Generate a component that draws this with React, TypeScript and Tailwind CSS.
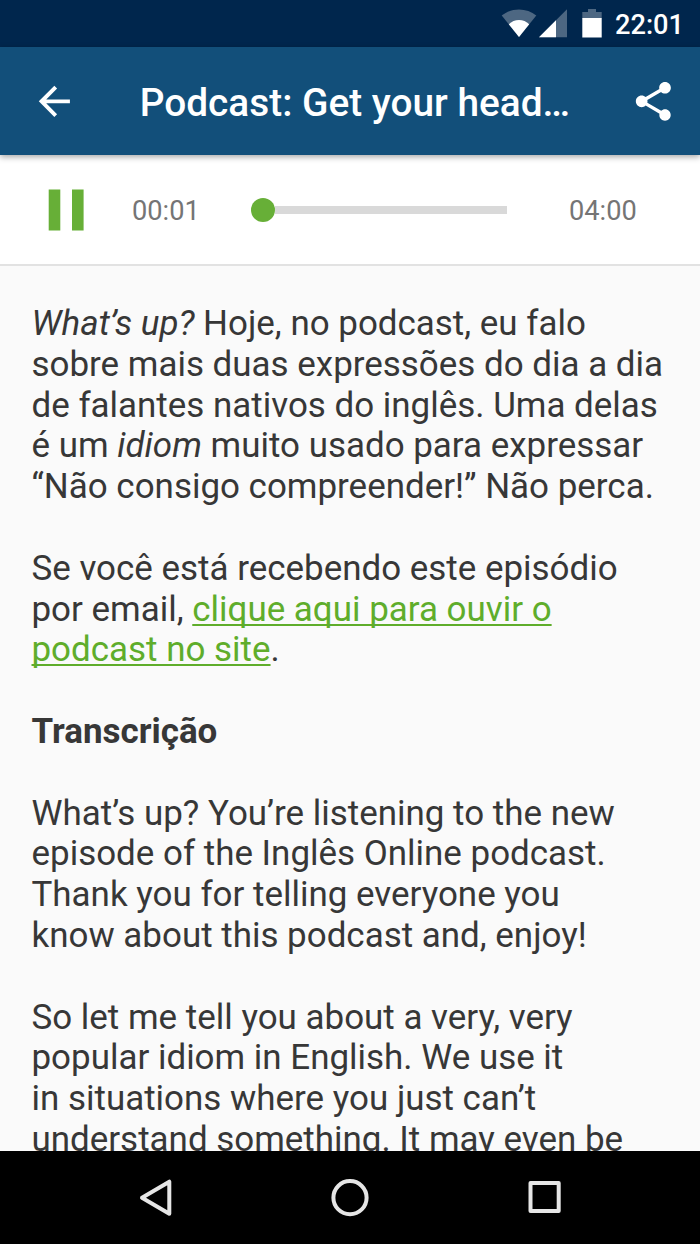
import { useState } from "react";

function StatusBar() {
  return (
    <div className="flex h-[47px] shrink-0 items-start justify-end bg-[#00264d] pt-[9px] pr-[16px]">
      <svg width="36" height="29" viewBox="0 0 36 29" className="mr-[2px]">
        <path d="M18 28 L0.7 6.6 C5.5 2.6 11.5 0.5 18 0.5 S30.5 2.6 35.3 6.6 Z" fill="#4d6782" />
        <path d="M18 28 L7.8 15.3 C10.6 12.4 14.2 10.9 18 10.9 S25.4 12.4 28.2 15.3 Z" fill="#fff" />
      </svg>
      <svg width="28" height="29" viewBox="0 0 28 29" className="mr-[15px]">
        <path d="M0 28.3 L28 0.3 V28.3 Z" fill="#4d6782" />
        <path d="M0 28.3 L17 11.3 V28.3 Z" fill="#fff" />
      </svg>
      <svg width="20" height="29" viewBox="0 0 20 29" className="mr-[13px]">
        <path d="M0.3 9.5 V3 H6 V0 H14 V3 H19.7 V9.5 Z" fill="#4d6782" />
        <path d="M0.3 9 H19.7 V28.5 H0.3 Z" fill="#fff" />
      </svg>
      <span className="text-[27.2px] leading-[32px] font-medium text-white">22:01</span>
    </div>
  );
}

function Header() {
  return (
    <header className="relative z-10 flex h-[108px] shrink-0 items-center bg-[#124f7a] pr-[23px] pl-[31px] text-white shadow-[0_2px_6px_rgba(0,0,0,0.35)]">
      <button aria-label="Voltar" className="shrink-0">
        <svg width="46.7" height="46.7" viewBox="0 0 24 24" fill="currentColor">
          <path d="M20 11H7.83l5.59-5.59L12 4l-8 8 8 8 1.41-1.41L7.83 13H20v-2z" />
        </svg>
      </button>
      <h1 className="ml-[62px] flex-1 pt-[3px] text-[38.8px] leading-[46px] font-medium whitespace-nowrap">
        Podcast: Get your head…
      </h1>
      <button aria-label="Compartilhar" className="shrink-0">
        <svg width="46.7" height="46.7" viewBox="0 0 24 24" fill="currentColor">
          <path d="M18 16.08c-.76 0-1.44.3-1.96.77L8.91 12.7c.05-.23.09-.46.09-.7s-.04-.47-.09-.7l7.05-4.11c.54.5 1.25.81 2.04.81 1.66 0 3-1.34 3-3s-1.34-3-3-3-3 1.34-3 3c0 .24.04.47.09.7L8.04 9.81C7.5 9.31 6.79 9 6 9c-1.66 0-3 1.34-3 3s1.34 3 3 3c.79 0 1.5-.31 2.04-.81l7.12 4.16c-.05.21-.08.43-.08.65 0 1.61 1.31 2.92 2.92 2.92 1.61 0 2.92-1.31 2.92-2.92s-1.31-2.92-2.92-2.92z" />
        </svg>
      </button>
    </header>
  );
}

function Player() {
  const [playing, setPlaying] = useState(true);

  return (
    <div className="flex h-[111px] shrink-0 items-center border-b-2 border-[#e2e2e2] bg-white pl-[48px] text-[27.2px] text-[#757575]">
      <button aria-label={playing ? "Pausar" : "Tocar"} onClick={() => setPlaying(!playing)}>
        <svg width="36" height="42" viewBox="0 0 36 42" fill="#67af37">
          {playing ? (
            <path d="M0.7 0.5H12.3V41.5H0.7Z M24 0.5H35.6V41.5H24Z" />
          ) : (
            <path d="M0.7 0.5 L35.6 21 L0.7 41.5 Z" />
          )}
        </svg>
      </button>
      <span className="ml-[48px] w-[68px] pt-[4px]">00:01</span>
      <div className="ml-[51px] flex w-[256px] items-center">
        <div className="size-[24px] rounded-full bg-[#67af37]" />
        <div className="h-[8px] flex-1 bg-[#d9d9d9]" />
      </div>
      <span className="ml-[62px] pt-[4px]">04:00</span>
    </div>
  );
}

function Episode() {
  return (
    <article className="min-h-0 flex-1 space-y-[40.8px] overflow-hidden bg-[#fafafa] pt-[38px] pl-[31.5px] text-[34.95px] leading-[40.8px] whitespace-nowrap text-[#373737]">
      <p>
        <em>What’s up?</em> Hoje, no podcast, eu falo
        <br />
        sobre mais duas expressões do dia a dia
        <br />
        de falantes nativos do inglês. Uma delas
        <br />
        é um <em>idiom</em> muito usado para expressar
        <br />
        “Não consigo compreender!” Não perca.
      </p>
      <p>
        Se você está recebendo este episódio
        <br />
        por email,{" "}
        <a className="text-[#5fad2b] underline decoration-2 underline-offset-[3px] [text-decoration-skip-ink:none]">
          clique aqui para ouvir o
          <br />
          podcast no site
        </a>
        .
      </p>
      <p className="font-bold">Transcrição</p>
      <p>
        What’s up? You’re listening to the new
        <br />
        episode of the Inglês Online podcast.
        <br />
        Thank you for telling everyone you
        <br />
        know about this podcast and, enjoy!
      </p>
      <p>
        So let me tell you about a very, very
        <br />
        popular idiom in English. We use it
        <br />
        in situations where you just can’t
        <br />
        understand something. It may even be
      </p>
    </article>
  );
}

function NavBar() {
  return (
    <nav className="flex h-[93px] shrink-0 items-center justify-center gap-[155px] bg-black">
      <svg width="40" height="40" viewBox="0 0 40 40" fill="none" stroke="#e6e6e6" strokeWidth="4" strokeLinejoin="round">
        <path d="M34.3 3.7 V35.7 L7 19.7 Z" />
      </svg>
      <svg width="40" height="40" viewBox="0 0 40 40" fill="none" stroke="#e6e6e6" strokeWidth="4">
        <circle cx="20" cy="19.7" r="16.6" />
      </svg>
      <svg width="40" height="40" viewBox="0 0 40 40" fill="none" stroke="#e6e6e6" strokeWidth="4" strokeLinejoin="round">
        <path d="M5.5 5 H33.7 V33 H5.5 Z" />
      </svg>
    </nav>
  );
}

export default function App() {
  return (
    <div className="flex h-[1244px] w-[700px] flex-col overflow-hidden font-[Roboto,sans-serif]">
      <StatusBar />
      <Header />
      <Player />
      <Episode />
      <NavBar />
    </div>
  );
}
